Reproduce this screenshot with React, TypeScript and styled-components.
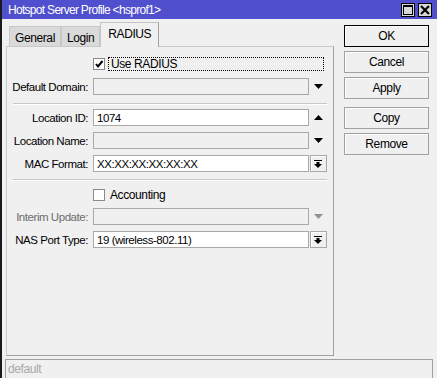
import React from 'react';
import styled, { createGlobalStyle } from 'styled-components';

const GlobalStyle = createGlobalStyle`
  html, body {
    margin: 0;
    padding: 0;
    background: #f0f0f0;
  }
  body {
    font-family: "Liberation Sans", Arial, sans-serif;
    font-size: 11px;
    letter-spacing: -0.3px;
    color: #000;
  }
`;

type FieldRow = {
  label: string;
  value?: string;
  enabled: boolean;
  control?: 'down' | 'up' | 'list';
  dim?: boolean;
  top: number;
};

const App = () => {
  return (
    <>
      <GlobalStyle />
      <Window>
        <TitleBar>
          <Title>Hotspot Server Profile &lt;hsprof1&gt;</Title>
          <TitleButtons>
            <TitleButton>
              <svg width="10" height="10" viewBox="0 0 10 10">
                <rect x="0.5" y="0.5" width="9" height="9" fill="none" stroke="#000" />
                <rect x="0" y="0" width="10" height="2" fill="#000" />
              </svg>
            </TitleButton>
            <TitleButton>
              <svg width="10" height="10" viewBox="0 0 10 10">
                <path d="M1 1 L9 9 M9 1 L1 9" stroke="#000" strokeWidth="2.2" />
              </svg>
            </TitleButton>
          </TitleButtons>
        </TitleBar>

        <Body>
          <LeftColumn>
            <Tabs>
              <Tab>General</Tab>
              <Tab>Login</Tab>
              <Tab active>RADIUS</Tab>
            </Tabs>
            <Panel>
              <CheckRow top={10}>
                <span />
                <CheckWrap>
                  <Box>
                    <svg width="10" height="10" viewBox="0 0 10 10">
                      <path d="M2 5 L4 7.5 L8.5 2" fill="none" stroke="#000" strokeWidth="2" />
                    </svg>
                  </Box>
                  <FocusLabel>Use RADIUS</FocusLabel>
                </CheckWrap>
              </CheckRow>

              <Field row={{ label: 'Default Domain:', enabled: false, control: 'down', top: 7 }} />
              <Separator top={8} />
              <Field row={{ label: 'Location ID:', value: '1074', enabled: true, control: 'up', top: 5 }} />
              <Field row={{ label: 'Location Name:', enabled: false, control: 'down', top: 6 }} />
              <Field row={{ label: 'MAC Format:', value: 'XX:XX:XX:XX:XX:XX', enabled: true, control: 'list', top: 6 }} />
              <Separator top={7} />

              <CheckRow top={8}>
                <span />
                <CheckWrap>
                  <Box />
                  <PlainLabel>Accounting</PlainLabel>
                </CheckWrap>
              </CheckRow>

              <Field row={{ label: 'Interim Update:', enabled: false, control: 'down', dim: true, top: 6 }} />
              <Field row={{ label: 'NAS Port Type:', value: '19 (wireless-802.11)', enabled: true, control: 'list', top: 6 }} />
            </Panel>
          </LeftColumn>

          <ButtonColumn>
            <Button primary>OK</Button>
            <Button>Cancel</Button>
            <Button>Apply</Button>
            <Button top={8}>Copy</Button>
            <Button>Remove</Button>
          </ButtonColumn>
        </Body>

        <StatusBar>default</StatusBar>
      </Window>
    </>
  );
};

const Field = ({ row }: { row: FieldRow }) => (
  <Row top={row.top}>
    <Label dim={row.dim}>{row.label}</Label>
    <Input enabled={row.enabled}>{row.value}</Input>
    <Control>
      {row.control === 'down' && (
        <svg width="9" height="5" viewBox="0 0 9 5">
          <polygon points="0,0 9,0 4.5,5" fill={row.dim ? '#8c968c' : '#000'} />
        </svg>
      )}
      {row.control === 'up' && (
        <svg width="9" height="5" viewBox="0 0 9 5">
          <polygon points="0,5 9,5 4.5,0" fill="#000" />
        </svg>
      )}
      {row.control === 'list' && (
        <ListButton>
          <svg width="8" height="8" viewBox="0 0 8 8">
            <rect x="0" y="0" width="8" height="1" fill="#000" />
            <rect x="2.5" y="2" width="3" height="2" fill="#000" />
            <polygon points="0,4 8,4 4,8" fill="#000" />
          </svg>
        </ListButton>
      )}
    </Control>
  </Row>
);

export default App;

const Window = styled.div`
  width: 437px;
  height: 378px;
  display: flex;
  flex-direction: column;
  box-sizing: border-box;
  border-left: 2px solid #1a1a1a;
  overflow: hidden;
`;

const TitleBar = styled.div`
  height: 20px;
  margin-left: -2px;
  background: #5050cf;
  display: flex;
  align-items: center;
  justify-content: space-between;
  padding: 0 5px 0 8px;
`;

const Title = styled.div`
  color: #fff;
  font-size: 12px;
  letter-spacing: -0.7px;
`;

const TitleButtons = styled.div`
  display: flex;
  gap: 3px;
`;

const TitleButton = styled.div`
  width: 14px;
  height: 14px;
  box-sizing: border-box;
  border: 1px solid #000;
  background: #d8d8d8;
  display: flex;
  align-items: center;
  justify-content: center;
`;

const Body = styled.div`
  flex: 1;
  display: flex;
  gap: 10px;
  padding-left: 4px;
`;

const LeftColumn = styled.div`
  display: flex;
  flex-direction: column;
  padding-top: 2px;
`;

const Tabs = styled.div`
  display: flex;
  align-items: flex-end;
  height: 25px;
  padding-left: 3px;
  position: relative;
  z-index: 1;
`;

const Tab = styled.div<{ active?: boolean }>`
  box-sizing: border-box;
  height: ${({ active }) => (active ? 25 : 20)}px;
  padding: ${({ active }) => (active ? '4px 7px 0 7px' : '4px 5px 0 5px')};
  background: ${({ active }) => (active ? '#f0f0f0' : '#dadada')};
  border: 1px solid ${({ active }) => (active ? '#c4c4c4' : '#c8c8c8')};
  border-bottom: none;
  border-right-color: ${({ active }) => (active ? '#a0a0a0' : '#c8c8c8')};
  font-size: 12px;
  letter-spacing: -0.4px;
  margin-bottom: ${({ active }) => (active ? -1 : 0)}px;
`;

const Panel = styled.div`
  width: 328px;
  height: 310px;
  box-sizing: border-box;
  border: 1px solid #a0a0a0;
  border-top-color: #c8c8c8;
  border-left-color: #c8c8c8;
  display: flex;
  flex-direction: column;
`;

const Row = styled.div<{ top: number }>`
  display: grid;
  grid-template-columns: 86px 216px 18px;
  align-items: center;
  height: 17px;
  margin-top: ${({ top }) => top}px;
`;

const CheckRow = styled(Row)`
  height: 14px;
`;

const Label = styled.div<{ dim?: boolean }>`
  text-align: right;
  padding-right: 5px;
  white-space: nowrap;
  font-size: 11.5px;
  letter-spacing: -0.45px;
  color: ${({ dim }) => (dim ? '#6d6d6d' : '#000')};
`;

const Input = styled.div<{ enabled: boolean }>`
  height: 17px;
  box-sizing: border-box;
  border: 1px solid #a8a8a8;
  background: ${({ enabled }) => (enabled ? '#fff' : '#f0f0f0')};
  padding: 1px 3px 0;
  line-height: 14px;
  font-size: 11.5px;
  letter-spacing: -0.45px;
  white-space: nowrap;
  overflow: hidden;
`;

const Control = styled.div`
  display: flex;
  align-items: center;
  justify-content: center;
  height: 17px;
`;

const ListButton = styled.div`
  width: 17px;
  height: 17px;
  box-sizing: border-box;
  border: 1px solid #a8a8a8;
  box-shadow: inset 1px 1px 0 #fff;
  background: #f0f0f0;
  display: flex;
  align-items: center;
  justify-content: center;
`;

const CheckWrap = styled.div`
  display: flex;
  align-items: center;
  grid-column: 2 / 4;
`;

const Box = styled.div`
  width: 12px;
  height: 12px;
  box-sizing: border-box;
  border: 1px solid #8a8a8a;
  background: #fff;
  display: flex;
  align-items: center;
  justify-content: center;
`;

const FocusLabel = styled.div`
  margin-left: 3px;
  padding-left: 2px;
  width: 216px;
  height: 14px;
  box-sizing: border-box;
  border: 1px dotted #000;
  line-height: 12px;
  font-size: 12px;
  letter-spacing: -0.4px;
`;

const PlainLabel = styled.div`
  margin-left: 5px;
  font-size: 12px;
  letter-spacing: -0.4px;
`;

const Separator = styled.div<{ top: number }>`
  height: 1px;
  margin: ${({ top }) => top}px 6px 0 6px;
  background: #c8c8c8;
  box-shadow: 0 1px 0 #fff;
`;

const ButtonColumn = styled.div`
  display: flex;
  flex-direction: column;
  padding-top: 6px;
`;

const Button = styled.div<{ primary?: boolean; top?: number }>`
  width: 85px;
  height: 22px;
  box-sizing: border-box;
  margin-top: ${({ top }) => top ?? 4}px;
  &:first-child {
    margin-top: 0;
  }
  border: 1px solid ${({ primary }) => (primary ? '#000' : '#a0a0a0')};
  box-shadow: inset 1px 1px 0 #fff;
  background: #f0f0f0;
  display: flex;
  align-items: center;
  justify-content: center;
  font-size: 12px;
  letter-spacing: -0.4px;
`;

const StatusBar = styled.div`
  height: 19px;
  margin: 3px 4px 0 3px;
  box-sizing: border-box;
  border: 1px solid #a0a0a0;
  border-bottom: none;
  padding: 2px 0 0 2px;
  color: #a8a8a8;
  font-size: 12px;
  letter-spacing: -0.4px;
`;
